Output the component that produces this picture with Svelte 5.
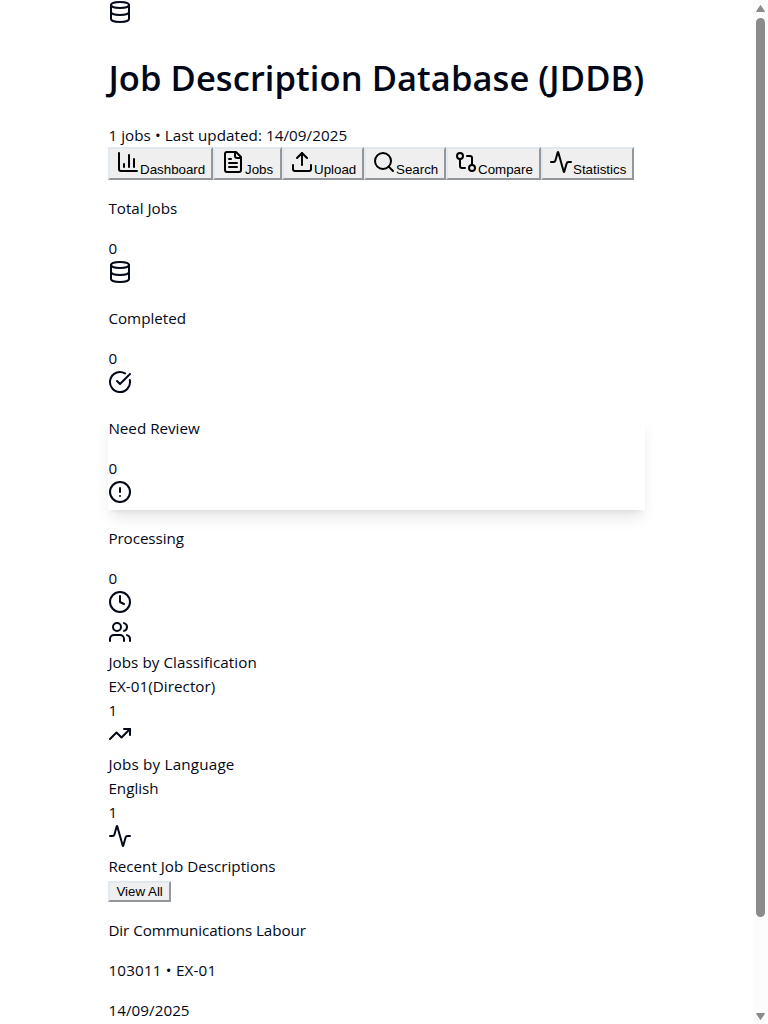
<script>
  const tabs = [
    { label: 'Dashboard', icon: 'chart', width: 105 },
    { label: 'Jobs', icon: 'file', width: 69 },
    { label: 'Upload', icon: 'upload', width: 82 },
    { label: 'Search', icon: 'search', width: 82 },
    { label: 'Compare', icon: 'compare', width: 95 },
    { label: 'Statistics', icon: 'activity', width: 93 }
  ];
  const stats = [
    { label: 'Total Jobs', icon: 'database' },
    { label: 'Completed', icon: 'check' },
    { label: 'Need Review', icon: 'alert', raised: true },
    { label: 'Processing', icon: 'clock', tight: true }
  ];
</script>

{#snippet icon(name)}
  <svg width="24" height="24" viewBox="0 0 24 24" fill="none" stroke="currentColor" stroke-width="2" stroke-linecap="round" stroke-linejoin="round">
    {#if name === 'database'}
      <ellipse cx="12" cy="5" rx="9" ry="3" /><path d="M3 5V19A9 3 0 0 0 21 19V5" /><path d="M3 12A9 3 0 0 0 21 12" />
    {:else if name === 'chart'}
      <path d="M3 3v16a2 2 0 0 0 2 2h16" /><path d="M18 17V9" /><path d="M13 17V5" /><path d="M8 17v-3" />
    {:else if name === 'file'}
      <path d="M15 2H6a2 2 0 0 0-2 2v16a2 2 0 0 0 2 2h12a2 2 0 0 0 2-2V7Z" /><path d="M14 2v4a2 2 0 0 0 2 2h4" /><path d="M10 9H8" /><path d="M16 13H8" /><path d="M16 17H8" />
    {:else if name === 'upload'}
      <path d="M12 3v12" /><path d="m17 8-5-5-5 5" /><path d="M21 15v4a2 2 0 0 1-2 2H5a2 2 0 0 1-2-2v-4" />
    {:else if name === 'search'}
      <circle cx="11" cy="11" r="8" /><path d="m21 21-4.34-4.34" />
    {:else if name === 'compare'}
      <circle cx="18" cy="18" r="3" /><circle cx="6" cy="6" r="3" /><path d="M13 6h3a2 2 0 0 1 2 2v7" /><path d="M11 18H8a2 2 0 0 1-2-2V9" />
    {:else if name === 'activity'}
      <path d="M22 12h-2.48a2 2 0 0 0-1.93 1.46l-2.35 8.36a.25.25 0 0 1-.48 0L9.24 2.18a.25.25 0 0 0-.48 0l-2.35 8.36A2 2 0 0 1 4.49 12H2" />
    {:else if name === 'check'}
      <path d="M21.801 10A10 10 0 1 1 17 3.335" /><path d="m9 11 3 3L22 4" />
    {:else if name === 'alert'}
      <circle cx="12" cy="12" r="10" /><path d="M12 8v4" /><path d="M12 16h.01" />
    {:else if name === 'clock'}
      <circle cx="12" cy="12" r="10" /><path d="M12 6v6l4 2" />
    {:else if name === 'users'}
      <path d="M16 21v-2a4 4 0 0 0-4-4H6a4 4 0 0 0-4 4v2" /><circle cx="9" cy="7" r="4" /><path d="M22 21v-2a4 4 0 0 0-3-3.87" /><path d="M16 3.13a4 4 0 0 1 0 7.75" />
    {:else if name === 'trend'}
      <path d="M16 7h6v6" /><path d="m22 7-8.5 8.5-5-5L2 17" />
    {/if}
  </svg>
{/snippet}

<div class="shell">
  <div class="viewport">
    <main>
      <div class="icon-row">{@render icon('database')}</div>
      <h1>Job Description Database (JDDB)</h1>
      <div class="line open">1 jobs • Last updated: 14/09/2025</div>
      <nav>
        {#each tabs as tab}
          <button style:width="{tab.width}px">{@render icon(tab.icon)}<span>{tab.label}</span></button>
        {/each}
      </nav>
      {#each stats as stat}
        <section class="stat" class:raised={stat.raised}>
          <p class:tight={stat.tight}>{stat.label}</p>
          <p>0</p>
          <div class="icon-row">{@render icon(stat.icon)}</div>
        </section>
      {/each}
      <section>
        <div class="icon-row">{@render icon('users')}</div>
        <div class="line open">Jobs by Classification</div>
        <div class="line open">EX-01(Director)</div>
        <div class="line">1</div>
      </section>
      <section>
        <div class="icon-row">{@render icon('trend')}</div>
        <div class="line wide">Jobs by Language</div>
        <div class="line">English</div>
        <div class="line">1</div>
      </section>
      <section>
        <div class="icon-row">{@render icon('activity')}</div>
        <div class="line">Recent Job Descriptions</div>
        <div class="action"><button class="view">View All</button></div>
        <p class="tight">Dir Communications Labour</p>
        <p class="wide">103011 • EX-01</p>
        <p class="open">14/09/2025</p>
      </section>
    </main>
  </div>
  <div class="scrollbar">
    <svg width="9" height="7" viewBox="0 0 9 7"><path d="M4.5 0.5 8.5 6.5H.5Z" /></svg>
    <div class="thumb"></div>
    <svg class="down" width="9" height="7" viewBox="0 0 9 7"><path d="M4.5 6.5 8.5.5H.5Z" /></svg>
  </div>
</div>

<style>
  :global(body) { margin: 0; overflow: hidden; background: #fff; }
  .shell {
    display: flex;
    height: 1024px;
    overflow: hidden;
    color: #020817;
    font: 15.2px/24px 'Segoe UI', 'Open Sans', 'Noto Sans', sans-serif;
  }
  .viewport { flex: 1; display: flex; justify-content: center; overflow: hidden; }
  main { width: 536.2px; white-space: nowrap; }
  .icon-row { height: 30px; }
  svg { display: block; }
  h1 {
    margin: 25px 0 23px;
    height: 45px;
    font-size: 34.5px;
    line-height: 45px;
    font-weight: 600;
    letter-spacing: 0.07px;
  }
  .line { height: 24px; }
  .open { letter-spacing: 0.06px; }
  .wide { letter-spacing: 0.2px; }
  .tight { letter-spacing: -0.07px; }
  nav { display: flex; height: 33px; }
  button {
    box-sizing: border-box;
    flex: none;
    height: 33px;
    margin: 0;
    padding: 1px 6px;
    display: flex;
    align-items: flex-start;
    border: 2px outset #e2e8f0;
    border-radius: 0;
    background: #efefef;
    color: #000;
    font: 13.333px/15px 'Liberation Sans', Arial, sans-serif;
  }
  button svg { flex: none; }
  button span { margin: 12px 0 0 -0.4px; }
  .stat { height: 94px; margin-top: 16px; }
  .stat p { margin: 16px 0 0; }
  .stat p:first-child { margin-top: 0; }
  .raised { box-shadow: 0 10px 15px -3px rgba(0, 0, 0, 0.1), 0 4px 6px -4px rgba(0, 0, 0, 0.1); }
  p { margin: 16px 0; height: 24px; }
  .action { height: 24px; padding-top: 3px; box-sizing: border-box; }
  .view { width: 63px; height: 21px; }
  .scrollbar {
    width: 15px;
    box-sizing: border-box;
    padding: 5px 3px 4px;
    background: #fcfcfc;
    display: flex;
    flex-direction: column;
  }
  .scrollbar svg { fill: #8b8b8b; stroke: #8b8b8b; stroke-linejoin: round; stroke-width: 1px; }
  .thumb { width: 9px; height: 899px; margin-top: 6px; border-radius: 5px; background: #8b8b8b; }
  .down { margin-top: auto; }
</style>
